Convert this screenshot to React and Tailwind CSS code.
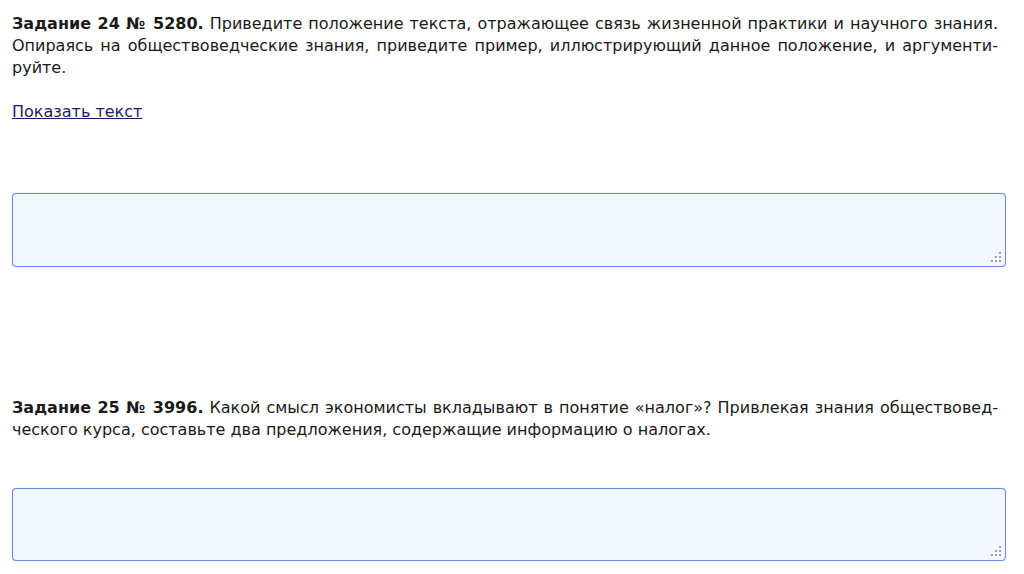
export default function App() {
  const J = "block [text-align-last:justify] text-justify";
  return (
    <div className="w-[1024px] h-[574px] bg-white overflow-hidden text-[16px] leading-[22px] text-[#1a1a1a]" style={{ fontFamily: '"DejaVu Sans", Verdana, sans-serif' }}>
      <div className="pl-[12px] pr-[26px] pt-[13px]">
        <p>
          <span className={J}><b>Задание 24 № 5280.</b> Приведите положение текста, отражающее связь жизненной практики и научного знания.</span>
          <span className={J}>Опираясь на обществоведческие знания, приведите пример, иллюстрирующий данное положение, и аргументи-</span>
          <span className="block">руйте.</span>
        </p>
        <p className="mt-[22px]">
          <a href="#" className="underline text-[#1c1c6b]">Показать текст</a>
        </p>
        <div className="mt-[70px] mr-[-8px] relative h-[74px] rounded-[4px] border border-[#6a8ae4] bg-[#f3f7ff] shadow-[0_0_1px_rgba(90,120,220,0.6)]">
          <Grip />
        </div>
        <p className="mt-[130px]">
          <span className={J}><b>Задание 25 № 3996.</b> Какой смысл экономисты вкладывают в понятие «налог»? Привлекая знания обществовед-</span>
          <span className="block">ческого курса, составьте два предложения, содержащие информацию о налогах.</span>
        </p>
        <div className="mt-[47px] mr-[-8px] relative h-[73px] rounded-[4px] border border-[#6a8ae4] bg-[#f3f7ff] shadow-[0_0_1px_rgba(90,120,220,0.6)]">
          <Grip />
        </div>
      </div>
    </div>
  );
}

function Grip() {
  return (
    <svg className="absolute right-[3px] bottom-[3px]" width="12" height="12" viewBox="0 0 12 12">
      {[[10, 2], [10, 6], [6, 6], [10, 10], [6, 10], [2, 10]].map(([x, y], i) => (
        <rect key={i} x={x - 1} y={y - 1} width="2" height="2" fill="#a0a0a0" />
      ))}
    </svg>
  );
}
